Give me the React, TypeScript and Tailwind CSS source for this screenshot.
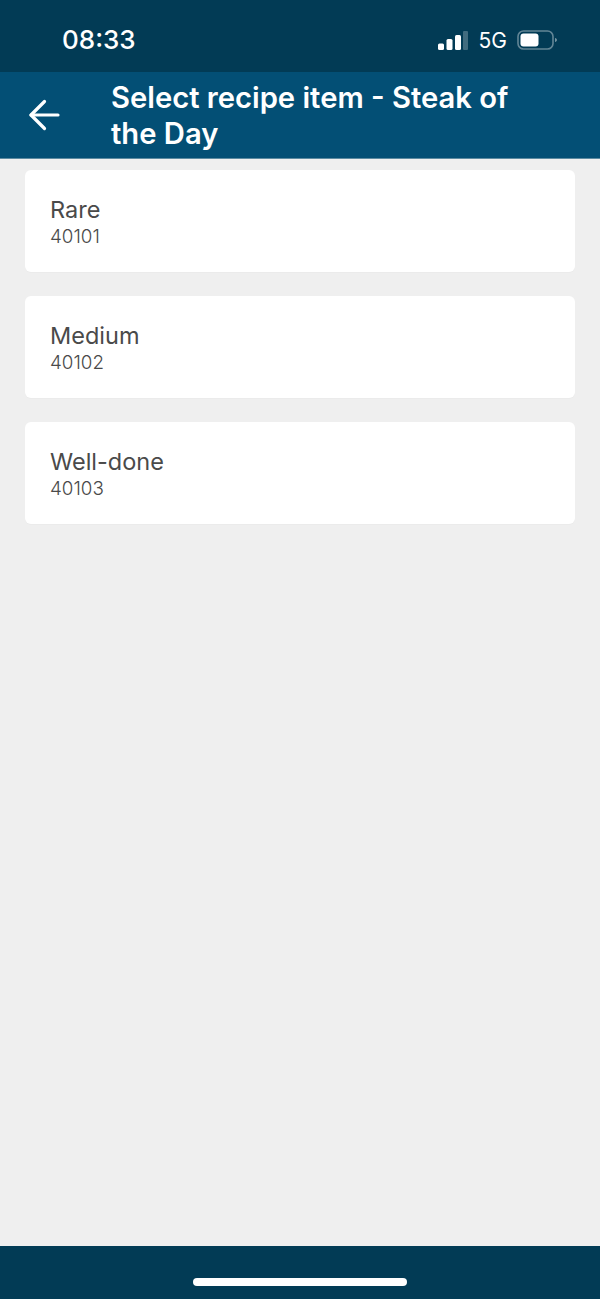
const items = [
  { name: "Rare", code: "40101" },
  { name: "Medium", code: "40102" },
  { name: "Well-done", code: "40103" },
];

function SignalIcon() {
  return (
    <svg width="30" height="19" viewBox="0 0 30 19" className="block">
      <rect x="0" y="12.5" width="6" height="6.5" rx="1.5" fill="#fff" />
      <rect x="8.5" y="8" width="6" height="11" rx="1.5" fill="#fff" />
      <rect x="17" y="4" width="6" height="15" rx="1.5" fill="#fff" />
      <rect x="25" y="0" width="5" height="19" rx="1" fill="#fff" fillOpacity="0.25" />
    </svg>
  );
}

function BatteryIcon() {
  return (
    <svg width="40" height="20" viewBox="0 0 40 20" className="block">
      <rect x="1" y="1" width="35" height="18" rx="5.5" fill="none" stroke="#fff" strokeOpacity="0.38" strokeWidth="1.6" />
      <rect x="3.5" y="3.5" width="18" height="13" rx="3" fill="#fff" />
      <path d="M38 8 C39.2 8.4 40 9.2 40 10 C40 10.8 39.2 11.6 38 12 Z" fill="#fff" fillOpacity="0.45" />
    </svg>
  );
}

export default function App() {
  return (
    <div className="flex h-[1299px] w-[600px] flex-col bg-[#efefef] font-['Inter',sans-serif]">
      {/* Status bar */}
      <div className="flex h-[72px] shrink-0 items-center justify-between bg-[#023b55] pl-[62px] pr-[43px] pt-[8px] text-white">
        <span className="text-[26px] font-medium leading-none">08:33</span>
        <div className="flex items-center">
          <SignalIcon />
          <span className="ml-[11px] text-[21px] leading-none">5G</span>
          <div className="ml-[10px]">
            <BatteryIcon />
          </div>
        </div>
      </div>

      {/* Header */}
      <div className="flex h-[87px] shrink-0 items-center border-b border-[#5d8ba1] bg-[#034f75]">
        <div className="flex w-[111px] shrink-0 justify-center pr-[24px]">
          <svg width="32" height="32" viewBox="0 0 32 32" fill="none" stroke="#fff" strokeWidth="3.2" strokeLinecap="round" strokeLinejoin="round">
            <path d="M30 16H3" />
            <path d="M16.5 2.5 3 16l13.5 13.5" />
          </svg>
        </div>
        <h1 className="w-[420px] pt-[2px] text-[29.2px] font-semibold leading-[36px] text-white">
          Select recipe item - Steak of the Day
        </h1>
      </div>

      {/* Recipe items */}
      <div className="flex flex-1 flex-col gap-[24px] px-[25px] pt-[11px]">
        {items.map((item) => (
          <div key={item.code} className="flex h-[102px] flex-col rounded-[6px] bg-white pl-[25px] pt-[25px] text-[#4a4a4a] shadow-[0_1px_1px_rgba(0,0,0,0.02)]">
            <span className="text-[23.5px] leading-[29px]">{item.name}</span>
            <span className="text-[18.8px] font-light leading-[25px]">{item.code}</span>
          </div>
        ))}
      </div>

      {/* Home indicator */}
      <div className="flex h-[53px] shrink-0 justify-center bg-[#023b55] pt-[32px]">
        <div className="h-[8px] w-[214px] rounded-full bg-white" />
      </div>
    </div>
  );
}
